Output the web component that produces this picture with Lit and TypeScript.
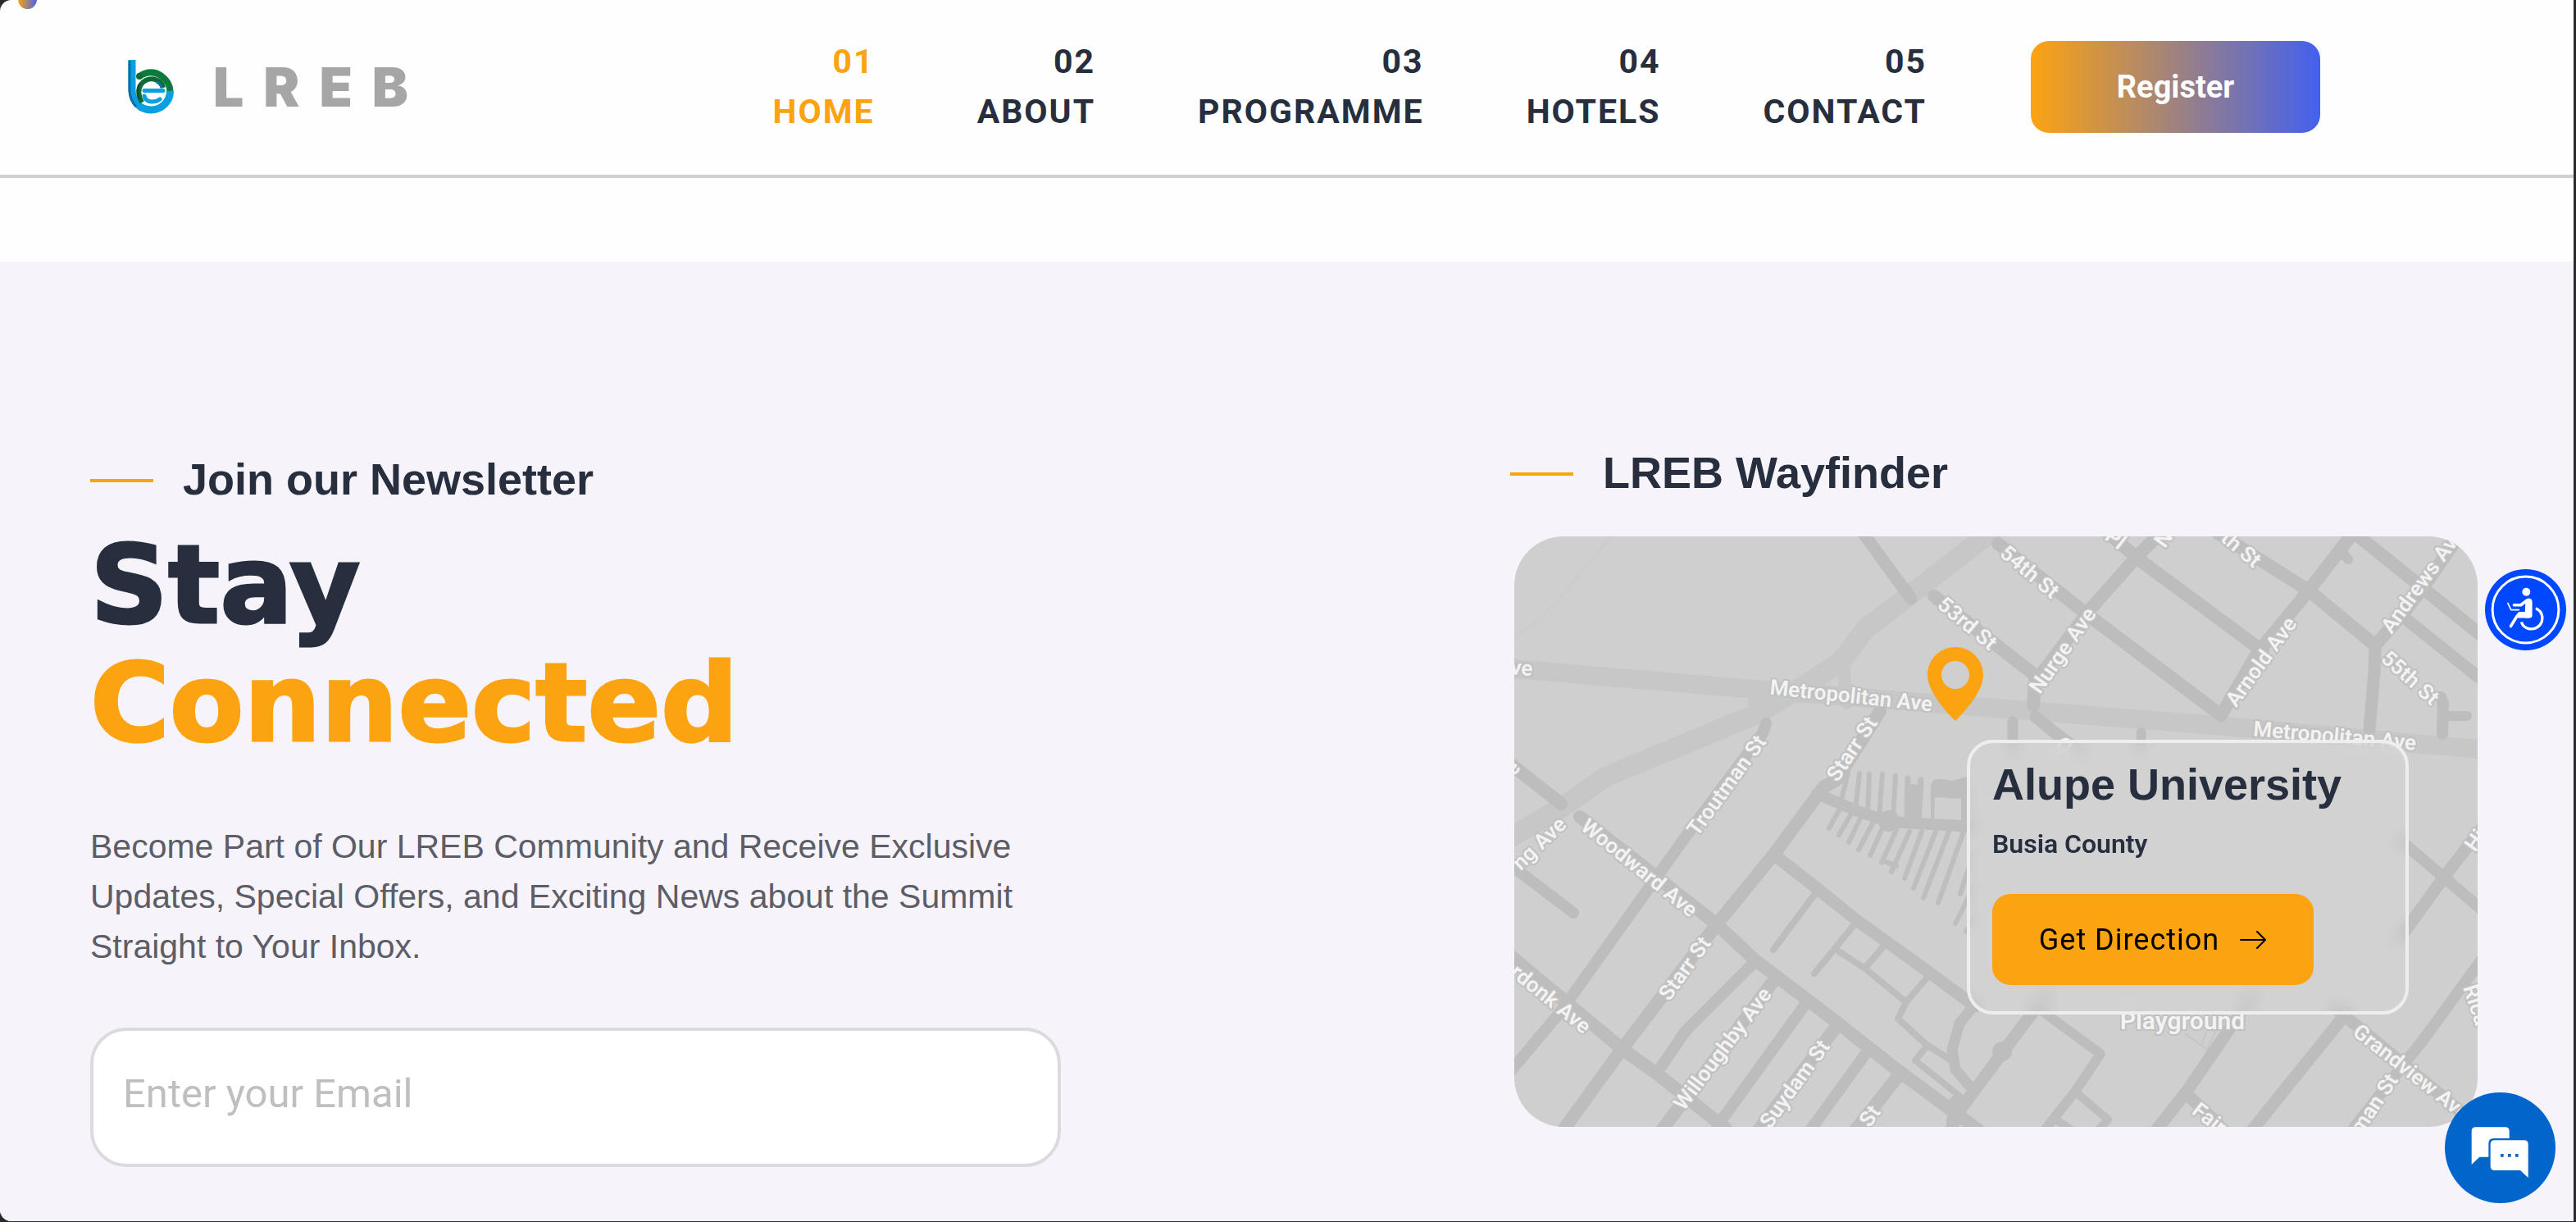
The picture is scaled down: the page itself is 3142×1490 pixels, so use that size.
import { LitElement, html, svg, css } from "lit";
import { customElement } from "lit/decorators.js";

interface NavItem {
  no: string;
  label: string;
  active?: boolean;
}

const NAV: NavItem[] = [
  { no: "01", label: "HOME", active: true },
  { no: "02", label: "ABOUT" },
  { no: "03", label: "PROGRAMME" },
  { no: "04", label: "HOTELS" },
  { no: "05", label: "CONTACT" },
];

/* Street geometry: [stroke width, path data] */
type Street = [number, string];

const AVENUES: Street[] = [
  [23, "M-5 161 L310 188 L633 213 L862 231 L1180 260"],
  [25, "M585 -8 L491 65 L428 113 L398 153 L352 183 L297 216 L112 293 L57 331 L-10 370"],
  [16, "M400 150 L406 203"],
  [24, "M297 188 L297 216"],
];

const STREETS: Street[] = [
  [15, "M424 -6 L484 76"],
  [16, "M512 73 L636 170"],
  [16, "M633 206 L635 178 L705 86 L761 23 L790 -6"],
  [16, "M590 9 L696 93 L862 218"],
  [16, "M724 -4 L763 29 L913 140"],
  [16, "M862 218 L906 143 L969 66 L1023 -4"],
  [16, "M858 -4 L969 66 L1050 133"],
  [12, "M1009 19 L1017 28"],
  [16, "M1025 -4 L1108 63 L1180 121"],
  [16, "M1050 133 L1085 93 L1108 63 L1156 -6"],
  [15, "M1050 133 L1049 166 L1043 236"],
  [15, "M1083 97 L1175 171"],
  [14, "M1130 196 L1133 203 L1132 241"],
  [12, "M1135 219 L1162 219"],
  [12, "M765 239 L764 262"],
  [13, "M608 226 L608 262"],
  [15, "M636 220 L660 240 L690 262"],
  [16, "M446 213 L394 296 L377 306 L318 386 L247 473 L133 623 L61 722"],
  [14, "M307 228 L303 240 L209 366 L57 579 L-6 654"],
  [16, "M-4 278 L57 326"],
  [16, "M80 342 L247 473 L293 516 L394 593 L465 649 L566 724"],
  [14, "M-4 401 L72 459"],
  [16, "M-4 512 L133 626 L175 656 L258 722"],
  [14, "M293 519 L209 603 L175 653"],
  [16, "M320 537 L180 724"],
  [14, "M356 569 L247 720"],
  [16, "M394 596 L298 724"],
  [14, "M432 626 L361 724"],
  [16, "M470 656 L416 724"],
  [14, "M369 314 L419 335 L457 348 L560 354"],
  [15, "M318 389 L369 429 L419 469 L508 533 L562 573"],
  [8, "M369 433 L316 504"],
  [8, "M415 473 L366 533"],
  [8, "M391 503 L428 527 L478 568"],
  [8, "M451 499 L428 526"],
  [8, "M505 536 L478 568 L468 588 L503 620 L533 639"],
  [8, "M503 622 L489 639 L545 684"],
  [13, "M562 570 L543 594 L534 626 L538 650 L556 671"],
  [15, "M650 560 L625 590 L596 629 L540 704"],
  [16, "M538 690 L534 724"],
  [12, "M640 576 L715 631 L684 677 L647 724"],
  [10, "M684 677 L724 711 L712 724"],
  [10, "M658 710 L680 724"],
  [15, "M900 560 L820 677 L783 724"],
  [15, "M820 680 L858 716"],
  [15, "M1016 580 L900 724"],
  [15, "M1000 574 L1160 706"],
  [14, "M1080 370 L1133 415 L1180 455"],
  [15, "M1180 356 L1133 417 L1080 490"],
  [14, "M1180 516 L1110 612 L1022 724"],
];

/* Short lanes fanning off the cemetery drive */
const LANES: Street[] = [
  [6, "M407 289 L398 325"], [6, "M421 289 L416 334"], [6, "M433 290 L431 338"],
  [6, "M449 290 L445 342"], [6, "M465 292 L462 344"], [7, "M480 295 L479 346"],
  [7, "M496 297 L493 350"], [16, "M487 310 L486 346"],
  [6, "M396 334 L384 356"], [6, "M410 340 L396 364"], [6, "M422 344 L408 373"],
  [6, "M438 348 L420 382"], [6, "M450 354 L434 389"], [6, "M466 358 L448 398"],
  [6, "M482 360 L460 409"], [6, "M497 360 L476 417"], [6, "M514 360 L487 429"],
  [6, "M530 360 L499 441"], [6, "M548 360 L517 447"], [6, "M560 386 L544 436"],
  [6, "M562 424 L538 472"], [6, "M564 460 L551 482"], [6, "M452 396 L466 402"],
];

/* Labels: text, x, y, rotation, anchor */
type Label = [string, number, number, number, string];

const LABELS: Label[] = [
  ["ve", -5, 168, 5, "start"],
  ["e", 4, 288, -50, "middle"],
  ["Metropolitan Ave", 410, 203, 6, "middle"],
  ["54th St", 623, 50, 40, "middle"],
  ["53rd St", 547, 113, 40, "middle"],
  ["Pl", 728, 10, 38, "middle"],
  ["N", 799, 8, -54, "middle"],
  ["th St", 881, 22, 40, "middle"],
  ["Nurge Ave", 676, 144, -55, "middle"],
  ["Arnold Ave", 918, 158, -54, "middle"],
  ["Andrews Ave", 1070, 120, -54, "start"],
  ["55th St", 1087, 179, 42, "middle"],
  ["Metropolitan Ave", 1000, 252, 5, "middle"],
  ["O", 665, 262, 40, "middle"],
  ["Starr St", 419, 264, -56, "middle"],
  ["Troutman St", 266, 309, -54, "middle"],
  ["Woodward Ave", 147, 411, 39, "middle"],
  ["ng Ave", 65, 353, -44, "end"],
  ["rdonk Ave", 39, 571, 39, "middle"],
  ["Starr St", 215, 532, -54, "middle"],
  ["Willoughby Ave", 261, 630, -53, "middle"],
  ["Suydam St", 349, 673, -54, "middle"],
  ["am St", 448, 702, -54, "end"],
  ["Grandview Ave", 1021, 607, 38, "start"],
  ["man St", 1056, 697, -56, "middle"],
  ["Fairview", 825, 703, 38, "start"],
  ["Hi", 1172, 386, -54, "start"],
  ["Rica", 1157, 550, 72, "start"],
];

@customElement("lreb-map")
export class LrebMap extends LitElement {
  static styles = css`
    :host {
      display: block;
    }
    .map {
      display: block;
      width: 100%;
      height: 100%;
    }
    .label {
      font: 600 26px Roboto, "Liberation Sans", sans-serif;
      fill: #f3f3f3;
      stroke: #c0c0c0;
      stroke-width: 4px;
      stroke-linejoin: round;
      paint-order: stroke;
    }
    .label.large {
      font-size: 30px;
    }
  `;

  render() {
    const line = (colour: string) => ([w, d]: Street) =>
      svg`<path d=${d} stroke=${colour} stroke-width=${w} />`;
    return html`
      <svg class="map" viewBox="0 0 1175 720" preserveAspectRatio="xMidYMid slice" role="img" aria-label="Street map">
        <rect width="1175" height="720" fill="#cfcfcf" />
        <path d="M118 0 L50 82 L0 126" stroke="#cccccc" stroke-width="2" fill="none" />
        <path d="M818 606 L845 626 L856 602 M838 620 L844 604" stroke="#c6c6c6" stroke-width="2" fill="none" />
        <g fill="none" stroke-linecap="round" stroke-linejoin="round">
          ${AVENUES.map(line("#c7c7c7"))}
          ${STREETS.map(line("#bdbdbd"))}
          ${LANES.map(line("#bebebe"))}
        </g>
        <path d="M508 346 V304 Q510 294 522 296 L534 298 L556 292 V354 H508Z M513 318 L545 320 V346 L512 345Z" fill="#bebebe" fill-rule="evenodd" />
        <circle cx="457" cy="347" r="13" fill="#bdbdbd" />
        <circle cx="595" cy="628" r="12" fill="#bdbdbd" />
        ${LABELS.map(
          ([t, x, y, r, a]) =>
            svg`<text class="label" x=${x} y=${y} text-anchor=${a} transform=${`rotate(${r} ${x} ${y})`}>${t}</text>`,
        )}
        <text class="label large" x="815" y="601" text-anchor="middle">Playground</text>
      </svg>
    `;
  }
}

@customElement("app-root")
export class AppRoot extends LitElement {
  static styles = css`
    :host {
      --orange: #fca311;
      --navy: #272f3f;
      display: block;
      box-sizing: border-box;
      min-height: 100vh;
      padding: 0 3px 1px 0;
      background: #2b2b2b;
      color: var(--navy);
      font-family: Roboto, "Liberation Sans", sans-serif;
    }
    * {
      box-sizing: border-box;
    }
    .page {
      position: relative;
      display: flex;
      flex-direction: column;
      min-height: calc(100vh - 1px);
      border-radius: 14px 0 0 14px;
      overflow: hidden;
      background: #fefefe;
    }
    .cursor {
      position: absolute;
      left: 22px;
      top: -12px;
      width: 23px;
      height: 23px;
      border-radius: 50%;
      background: linear-gradient(90deg, var(--orange), #4361ee);
    }
    .header {
      display: flex;
      align-items: center;
      height: 217px;
      padding: 0 309px 2px 156px;
      border-bottom: 4px solid #d0d0d0;
    }
    .brand {
      display: flex;
      align-items: center;
      gap: 46px;
      color: #a6a6a6;
      text-decoration: none;
      font: 900 66px/72px Inter, "Liberation Sans", sans-serif;
      letter-spacing: 24px;
    }
    .brand-mark {
      width: 58px;
      height: 66px;
    }
    .nav {
      display: flex;
      gap: 125px;
      margin-left: auto;
    }
    .nav-link {
      display: flex;
      flex-direction: column;
      align-items: flex-end;
      color: var(--navy);
      text-decoration: none;
      font-size: 41px;
      font-weight: 700;
      line-height: 61px;
      letter-spacing: 2px;
    }
    .nav-link.active {
      color: var(--orange);
    }
    .register {
      width: 353px;
      height: 112px;
      margin-left: 127px;
      border: 0;
      border-radius: 22px;
      background: linear-gradient(90deg, var(--orange), #4361ee);
      color: #fff;
      font: 700 38px Roboto, sans-serif;
    }
    .connect {
      flex: 1;
      display: grid;
      grid-template-columns: 1184fr 1180fr;
      gap: 548px;
      align-items: start;
      margin-top: 102px;
      padding: 226px 117px 64px 110px;
      background: #f6f4fa;
    }
    .newsletter {
      padding-top: 8px;
    }
    .eyebrow {
      display: flex;
      align-items: center;
      gap: 36px;
      margin: 0;
      font: 700 54px/62px "Liberation Sans", Arial, sans-serif;
    }
    .eyebrow::before {
      content: "";
      width: 77px;
      height: 4px;
      margin-top: 4px;
      background: var(--orange);
    }
    .title {
      margin: 26px 0 0;
      font: 700 132px/144px "DejaVu Sans", Verdana, sans-serif;
      -webkit-text-stroke: 3px currentColor;
    }
    .accent {
      display: block;
      color: var(--orange);
    }
    .lead {
      max-width: 1150px;
      margin: 73px 0 68px;
      color: #5d5d67;
      font: 400 41px/61px "Liberation Sans", Arial, sans-serif;
    }
    .email {
      display: block;
      width: 100%;
      height: 170px;
      padding: 0 36px 10px;
      border: 4px solid #dcdae0;
      border-radius: 44px;
      background: #fff;
      color: var(--navy);
      font: 400 49px Roboto, sans-serif;
    }
    .email::placeholder {
      color: #bfbfbf;
      opacity: 1;
    }
    .hidden-label {
      position: absolute;
      width: 1px;
      height: 1px;
      overflow: hidden;
      clip-path: inset(50%);
    }
    .map-frame {
      position: relative;
      height: 720px;
      margin: 47px 0 0 5px;
      border-radius: 60px;
      overflow: hidden;
    }
    .map-view {
      height: 100%;
    }
    .pin {
      position: absolute;
      left: 504px;
      top: 135px;
      width: 68px;
      height: 90px;
    }
    .place {
      position: absolute;
      top: 248px;
      right: 84px;
      width: 539px;
      padding: 19px 27px 32px;
      border: 4px solid #eeeeee;
      border-radius: 32px;
      background: rgba(220, 220, 220, 0.3);
      backdrop-filter: blur(10px);
    }
    .place-name {
      margin: 0;
      font: 700 54px/62px "Liberation Sans", Arial, sans-serif;
      white-space: nowrap;
    }
    .place-county {
      margin: 22px 0 41px;
      font-size: 32px;
      font-weight: 600;
      line-height: 40px;
    }
    .direction {
      display: flex;
      align-items: center;
      justify-content: center;
      gap: 24px;
      width: 392px;
      height: 111px;
      border-radius: 22px;
      background: var(--orange);
      color: #000;
      text-decoration: none;
      font-size: 36px;
      letter-spacing: 1px;
    }
    .arrow {
      width: 34px;
      height: 22px;
    }
    .round {
      position: fixed;
      padding: 0;
      border: 0;
      border-radius: 50%;
    }
    .round svg {
      display: block;
      width: 100%;
      height: 100%;
    }
    .access {
      right: 12px;
      top: 694px;
      width: 99px;
      height: 99px;
      background: #0048ff;
    }
    .chat {
      right: 25px;
      bottom: 23px;
      width: 135px;
      height: 135px;
      background: #0066cc;
    }
  `;

  render() {
    return html`
      <div class="page">
        <header class="header">
          <a class="brand" href="#home">
            <svg class="brand-mark" viewBox="0 0 58 66" fill="none" aria-hidden="true">
              <path d="M5 0 V36 C5 51 15 61 28 61 C41 61 51.500 51 51.500 38" stroke="#0a9fe0" stroke-width="9" />
              <path d="M2 1 V38 Q3 50 10 57" stroke="#0b6fa6" stroke-width="3" />
              <path d="M14 20 Q28 11 40 19 Q51 27 51.500 38" stroke="#0b7a3c" stroke-width="8" stroke-linecap="butt" />
              <circle cx="14" cy="20" r="4" fill="#0b6b35" />
              <path d="M17 52 Q10 38 16 30 Q22 22 32 23.500 Q41 26 43 34" stroke="#0f6b35" stroke-width="6" />
              <path d="M14 48 Q9 36 15 28" stroke="#0a4d2a" stroke-width="2" />
              <path d="M20 37.500 H43" stroke="#0a9fe0" stroke-width="5" stroke-linecap="round" />
              <path d="M20 44 Q22 51 29 51 Q35 51 39 48" stroke="#0a9fe0" stroke-width="5" stroke-linecap="round" />
              <path d="M35 27 Q40 29 41 34" stroke="#0b6fa6" stroke-width="3" />
            </svg>
            <span>LREB</span>
          </a>
          <nav class="nav" aria-label="Main">
            ${NAV.map(
              (n) => html`<a class="nav-link ${n.active ? "active" : ""}" href="#${n.label.toLowerCase()}"
                ><span>${n.no}</span><span>${n.label}</span></a
              >`,
            )}
          </nav>
          <button class="register" type="button">Register</button>
        </header>

        <main class="connect">
          <section class="newsletter">
            <h3 class="eyebrow">Join our Newsletter</h3>
            <h2 class="title">Stay <span class="accent">Connected</span></h2>
            <p class="lead">
              Become Part of Our LREB Community and Receive Exclusive Updates, Special Offers, and Exciting News about
              the Summit Straight to Your Inbox.
            </p>
            <label class="hidden-label" for="email">Enter your Email</label>
            <input class="email" id="email" type="email" placeholder="Enter your Email" />
          </section>

          <section>
            <h3 class="eyebrow">LREB Wayfinder</h3>
            <div class="map-frame">
              <lreb-map class="map-view"></lreb-map>
              <svg class="pin" viewBox="0 0 68 90" aria-hidden="true">
                <path
                  d="M34 0 C15 0 0 15 0 34 C0 52 18 74 34 90 C50 74 68 52 68 34 C68 15 53 0 34 0Z M34 17 A17 17 0 1 1 34 51 A17 17 0 1 1 34 17Z"
                  fill="#fca311"
                  fill-rule="evenodd"
                />
              </svg>
              <div class="place">
                <h4 class="place-name">Alupe University</h4>
                <p class="place-county">Busia County</p>
                <a class="direction" href="#direction">
                  <span>Get Direction</span>
                  <svg class="arrow" viewBox="0 0 34 22" fill="none" stroke="#000" stroke-width="2" stroke-linecap="round" stroke-linejoin="round" aria-hidden="true">
                    <path d="M2 11 H32 M22 1 L32 11 L22 21" />
                  </svg>
                </a>
              </div>
            </div>
          </section>
        </main>
        <div class="cursor"></div>
      </div>

      <button class="round access" type="button" aria-label="Accessibility">
        <svg viewBox="32 27 299 299" fill="none" stroke="#fff" stroke-linejoin="round" stroke-linecap="round">
          <circle cx="181.500" cy="176.500" r="122" stroke-width="9" />
          <circle cx="184" cy="111" r="15" fill="#fff" stroke="none" />
          <path d="M139 159 H164 L188 141" stroke-width="11" />
          <path d="M181 147 Q184 134 194 134 Q206 135 206 148 V198 Q206 207 196 207 H178 L179 190Z" fill="#fff" stroke="none" />
          <path d="M196 201 H149 L127 237" stroke-width="11" />
          <path d="M182 184 H160 Q150 186 146 200 H190Z" fill="#fff" stroke="none" />
          <path d="M116 152 L128 177 H157" stroke-width="5" />
          <path d="M219 171 C247 183 249 216 233 234 C212 255 176 251 166 222" stroke-width="10" stroke-linecap="butt" />
        </svg>
      </button>
      <button class="round chat" type="button" aria-label="Chat">
        <svg viewBox="36 36 405 405" fill="#fff">
          <path d="M149 163 H257 Q272 163 272 178 V204 H215 Q196 204 196 223 V272 H163 L134 300 V178 Q134 163 149 163Z" />
          <path d="M218 211 H327 Q341 211 341 225 V348 L312 321 H218 Q203 321 203 307 V225 Q203 211 218 211Z" />
          <path d="M240 261 h11 v11 h-11z M267 261 h11 v11 h-11z M294 261 h11 v11 h-11z" fill="#0066cc" />
        </svg>
      </button>
    `;
  }
}
